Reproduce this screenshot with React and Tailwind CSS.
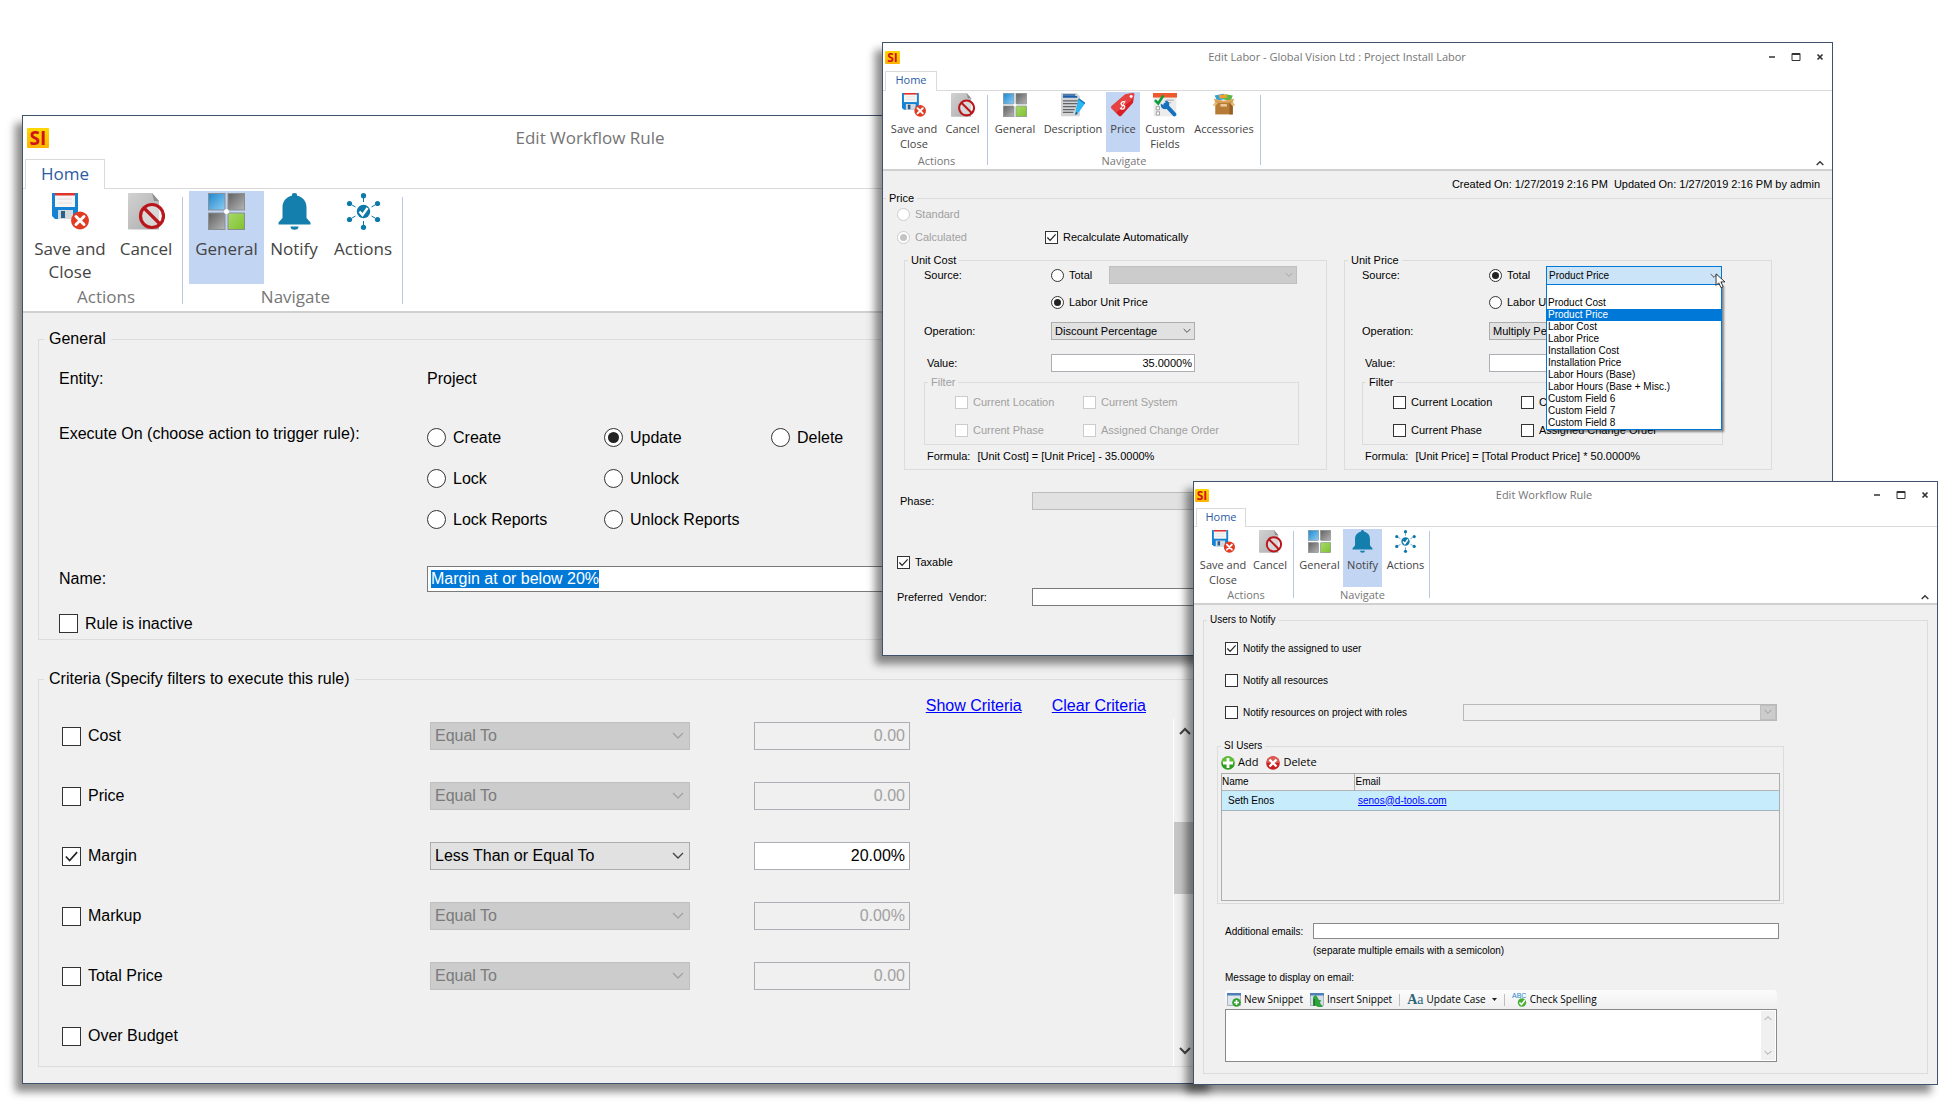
import React from 'react';
import clsx from 'clsx';

/* ---------- Ribbon icons ---------- */

const SaveIcon = ({ className }) => (
    <svg viewBox="0 0 37 37" className={className} aria-hidden="true">
        <path d="M0 0h26v26H3l-3-3z" fill="#1583d4" />
        <path d="M3 0h20v14H3z" fill="#f7f4f4" />
        <path d="M3 0h20v2.500H3z" fill="#e0342b" />
        <path d="M6 6h14M6 10h14" stroke="#dedede" strokeWidth="1" />
        <path d="M6 17h15v9H6z" fill="#d4d9dd" />
        <path d="M9 18h4v7H9z" fill="#2d5f8a" />
        <circle cx="28" cy="27.500" r="9" fill="#e33a22" />
        <path d="M24 23.500l8 8M32 23.500l-8 8" stroke="#fff" strokeWidth="3" strokeLinecap="round" />
    </svg>
);

const CancelIcon = ({ className }) => (
    <svg viewBox="0 0 37 37" className={className} aria-hidden="true">
        <defs>
            <linearGradient id="page-fill" x1="0" y1="0" x2="1" y2="1">
                <stop offset="0" stopColor="#d2d2d2" />
                <stop offset="1" stopColor="#acacac" />
            </linearGradient>
        </defs>
        <path d="M1 0h23l7 8v28.500H1a1 1 0 0 1-1-1V1a1 1 0 0 1 1-1z" fill="url(#page-fill)" />
        <path d="M24 0l7 8h-5z" fill="#8d8d8d" />
        <circle cx="24" cy="23" r="11.500" fill="#ececec" fillOpacity="0.6" stroke="#b9171c" strokeWidth="3.200" />
        <path d="M16 15l16 16" stroke="#b9171c" strokeWidth="3.200" />
    </svg>
);

const GeneralIcon = ({ className }) => (
    <svg viewBox="0 0 37 37" className={className} aria-hidden="true">
        <defs>
            <linearGradient id="tile-blue" x1="0" y1="0" x2="1" y2="1">
                <stop offset="0" stopColor="#1d87cf" />
                <stop offset="1" stopColor="#8fcdf2" />
            </linearGradient>
            <linearGradient id="tile-gray" x1="0" y1="0" x2="1" y2="1">
                <stop offset="0" stopColor="#606060" />
                <stop offset="1" stopColor="#b5b5b5" />
            </linearGradient>
            <linearGradient id="tile-green" x1="0" y1="0" x2="1" y2="1">
                <stop offset="0" stopColor="#a9d86c" />
                <stop offset="1" stopColor="#7fc22b" />
            </linearGradient>
        </defs>
        <rect x="0.500" y="0.500" width="16.500" height="16.500" fill="url(#tile-blue)" stroke="#8a8f94" />
        <rect x="20" y="0.500" width="16.500" height="16.500" fill="url(#tile-gray)" stroke="#8a8f94" />
        <rect x="0.500" y="20" width="16.500" height="16.500" fill="url(#tile-gray)" stroke="#8a8f94" />
        <rect x="20" y="20" width="16.500" height="16.500" fill="url(#tile-green)" stroke="#8a8f94" />
        <circle cx="18.500" cy="18.500" r="2.500" fill="#fff" />
    </svg>
);

const BellIcon = ({ className }) => (
    <svg viewBox="0 0 37 37" className={className} fill="#147eac" aria-hidden="true">
        <path d="M18.500 0a2.600 2.600 0 0 1 2.600 2.800C27 4 30.500 8.500 30.500 14.500V25l4 4.500V31.500H2.500V29.500l4-4.500V14.500C6.500 8.500 10 4 15.900 2.800A2.600 2.600 0 0 1 18.500 0z" />
        <path d="M14.500 33.500h8a4 3.200 0 0 1-8 0z" />
    </svg>
);

const ActionsIcon = ({ className }) => (
    <svg viewBox="0 0 37 37" className={className} fill="#0d79a8" aria-hidden="true">
        <circle cx="18.500" cy="18.500" r="6.700" />
        <circle cx="18.500" cy="2.700" r="2.600" />
        <circle cx="18.500" cy="34.300" r="2.600" />
        <circle cx="4.500" cy="10.500" r="2.600" />
        <circle cx="32.500" cy="10.500" r="2.600" />
        <circle cx="4.500" cy="26.500" r="2.600" />
        <circle cx="32.500" cy="26.500" r="2.600" />
        <path
            d="M18.500 5v4M18.500 28v4M7 12l3.500 2M30 12l-3.500 2M7 25l3.500-2M30 25l-3.500-2"
            stroke="#0d79a8"
            strokeWidth="1"
        />
        <path d="M14.500 18.500l3 3.500 5-7" fill="none" stroke="#fff" strokeWidth="2.400" />
    </svg>
);

const DescriptionIcon = ({ className }) => (
    <svg viewBox="0 0 37 37" className={className} aria-hidden="true">
        <path d="M0 0h24l5 5v31H0z" fill="#d3d3d3" />
        <path d="M3 3h19M3 6h22" stroke="#1b5fa8" strokeWidth="2.500" />
        <path d="M3 12h23M3 16.500h23M3 21h20M3 25.500h18M3 30h16" stroke="#5f6468" strokeWidth="2" />
        <path d="M27 9l10 7-9 13-6 5 1-9z" fill="#2cb6f2" />
        <path d="M27 9l10 7" stroke="#1579c4" strokeWidth="2.500" />
        <path d="M22 34l1-5 3 2.500z" fill="#134f86" />
    </svg>
);

const PriceIcon = ({ className }) => (
    <svg viewBox="0 0 37 37" className={className} aria-hidden="true">
        <path d="M22 2l12-2q2 0 2 2l-2 13-18 20q-2 2-4 0L1 24q-2-2 0-4z" fill="#d81f27" />
        <path d="M22 2l12-2q2 0 2 2l-1 6L8 30 1 24q-2-2 0-4z" fill="#f05a55" fillOpacity="0.600" />
        <circle cx="31" cy="5.500" r="2.300" fill="#fff" />
        <path d="M21 14c-3-2-7 1-5 4s6 0 5 4-5 3-7 1" fill="none" stroke="#fff" strokeWidth="2" />
        <path d="M15 25l7-13" fill="none" stroke="#fff" strokeWidth="1.500" />
    </svg>
);

const CustomFieldsIcon = ({ className }) => (
    <svg viewBox="0 0 37 37" className={className} aria-hidden="true">
        <path d="M1 0h35v36H1z" fill="#ececec" />
        <path d="M0 0h37v7H0z" fill="#ee5a2e" />
        <path d="M5 21h5v5H5zM5 29h5v5H5z" fill="#fff" stroke="#777" />
        <path d="M20 11h12M20 15h8" stroke="#a8a8a8" strokeWidth="1.500" />
        <path d="M3 11l5 5 8-12" fill="none" stroke="#119c3a" strokeWidth="4" />
        <path d="M19 18l14 15" stroke="#1770bd" strokeWidth="6" strokeLinecap="round" />
        <path d="M12 16q-1 9 8 9l5-5q1-9-7-8l3 5-3 3z" fill="#1770bd" />
    </svg>
);

const AccessoriesIcon = ({ className }) => (
    <svg viewBox="0 0 37 37" className={className} aria-hidden="true">
        <path d="M4 4l14-3 4 8-14 3z" fill="#27a3e0" />
        <path d="M20 2l12 2-3 8-11-2z" fill="#56b947" />
        <path d="M10 3l12-1 2 5-12 2z" fill="#f0a030" />
        <path d="M5 14h27v19H5z" fill="#b87b35" />
        <path d="M27 14h5v19h-5z" fill="#946026" />
        <path d="M5 14L1 19l3 1 5-4zM32 14l4 5-4 1-4-4z" fill="#e8bd7a" />
        <path d="M3 9l15 3 16-3-2 6H5z" fill="#d9a35a" />
        <path d="M13 17h10v4H13z" fill="#e8c89a" />
    </svg>
);

/* ---------- Small glyphs ---------- */

const Chevron = ({ up, className, width = 1.4 }) => (
    <svg viewBox="0 0 12 8" className={className} fill="none" stroke="currentColor" strokeWidth={width} aria-hidden="true">
        <path d={up ? 'M1 7l5-5 5 5' : 'M1 1l5 5 5-5'} />
    </svg>
);

const AddIcon = () => (
    <svg viewBox="0 0 14 14" className="size-3.5" aria-hidden="true">
        <circle cx="7" cy="7" r="6.800" fill="#2f9e1e" />
        <path d="M0.200 7a6.800 6.800 0 0 1 13.600 0z" fill="#63bd3c" />
        <path d="M7 2v10M2 7h10" stroke="#fff" strokeWidth="2.800" />
    </svg>
);

const DeleteIcon = () => (
    <svg viewBox="0 0 14 14" className="size-3.5" aria-hidden="true">
        <circle cx="7" cy="7" r="6.800" fill="#c81e1e" />
        <path d="M0.200 7a6.800 6.800 0 0 1 13.600 0z" fill="#dd5a52" />
        <path d="M3.500 3.500l7 7M10.500 3.500l-7 7" stroke="#fff" strokeWidth="2.400" />
    </svg>
);

const NewSnippetIcon = () => (
    <svg viewBox="0 0 14 14" className="size-3.5" aria-hidden="true">
        <path d="M0.500 0.500h13v12H0.500z" fill="#dfe6ee" stroke="#a9b4c0" />
        <path d="M0 0h14v2.500H0z" fill="#4f7fb8" />
        <circle cx="9.500" cy="9.500" r="4.300" fill="#33a02c" />
        <path d="M9.500 7v5M7 9.500h5" stroke="#fff" strokeWidth="1.600" />
    </svg>
);

const InsertSnippetIcon = () => (
    <svg viewBox="0 0 14 14" className="size-3.5" aria-hidden="true">
        <path d="M0.500 0.500h13v12H0.500z" fill="#d5dde6" stroke="#a9b4c0" />
        <path d="M0 0h14v2.500H0z" fill="#4f7fb8" />
        <path d="M3 4l3-2 3 5h2l-1 3 3 4H8L4 12z" fill="#2ea33a" />
        <path d="M4 6v7" stroke="#176d22" strokeWidth="1.500" />
    </svg>
);

const SpellingIcon = () => (
    <svg viewBox="0 0 15 15" className="size-[15px]" aria-hidden="true">
        <text x="0" y="6" fontSize="7" fontFamily="Liberation Sans, sans-serif" fill="#1f86c8">ABC</text>
        <circle cx="10" cy="10.500" r="4.200" fill="#46ad35" />
        <path d="M7.500 10.500l2 2 3.500-4.500" fill="none" stroke="#fff" strokeWidth="1.500" />
    </svg>
);

/* ---------- Window chrome ---------- */

const SIZES = {
    lg: {
        bar: 'h-[43px] pl-1',
        logo: 'w-[22px] h-5 text-[19px] leading-5',
        title: 'text-[17px] pr-[84px]',
        tabs: 'h-[30px]',
        tab: 'w-20 text-[17px]',
        ribbon: 'h-[124px]',
        firstGroup: 'pl-[7px]',
        group: 'pl-[6px] pt-[2px]',
        buttons: 'h-[93px]',
        button: 'pt-[2px] text-[17px] leading-[23px]',
        icon: 'size-[37px] mb-[7px]',
        caption: 'text-[17px] leading-[26px]',
        rule: 'mt-[8px] h-[107px]',
    },
    md: {
        bar: 'h-7 pl-[2px]',
        logo: 'w-[15px] h-[13px] text-[12px] leading-[13px]',
        title: 'text-[11px] pr-[41px]',
        tabs: 'h-5',
        tab: 'w-[52px] text-[11px]',
        ribbon: 'h-20',
        firstGroup: 'pl-[5px]',
        group: 'px-[2px] pt-[1px]',
        buttons: 'h-[61px]',
        button: 'pt-[1px] text-[11px] leading-[15px]',
        icon: 'size-6 mb-[4px]',
        caption: 'text-[11px] leading-[17px]',
        rule: 'mt-[4px] h-[70px]',
    },
    sm: {
        bar: 'h-[26px] pl-[1px]',
        logo: 'w-[14px] h-[13px] text-[12px] leading-[13px]',
        title: 'text-[11px] pr-[41px]',
        tabs: 'h-[19px]',
        tab: 'w-[50px] text-[11px]',
        ribbon: 'h-[78px]',
        firstGroup: 'pl-[5px]',
        group: 'pl-[2px] pt-[2px]',
        buttons: 'h-[58px]',
        button: 'pt-[1px] text-[11px] leading-[15px]',
        icon: 'size-[23px] mb-[4px]',
        caption: 'text-[11px] leading-[15px]',
        rule: 'mt-[4px] h-[67px]',
    },
};

const RibbonGroup = ({ size, group, first }) => {
    const s = SIZES[size];
    return (
        <>
            <div className={clsx('flex flex-col', s.group, first && s.firstGroup)}>
                <div className={clsx('flex', s.buttons)}>
                    {group.items.map(({ label, Icon, width, active }) => (
                        <button
                            key={label}
                            type="button"
                            className={clsx(
                                'flex flex-col items-center text-center whitespace-pre-line text-[#444]',
                                s.button,
                                width,
                                active && 'bg-[#c2d5f2]'
                            )}
                        >
                            <Icon className={s.icon} />
                            {label}
                        </button>
                    ))}
                </div>
                <div className={clsx('text-center text-[#777]', s.caption)}>{group.caption}</div>
            </div>
            <div className={clsx('w-px bg-[#b9c8e0]', s.rule)} />
        </>
    );
};

const AppWindow = ({ size, title, groups, controls, className, children }) => {
    const s = SIZES[size];
    return (
        <section
            className={clsx(
                'absolute border border-[#41536c] bg-[#f0f0f0] shadow-[-7px_8px_8px_rgba(0,0,0,0.45)]',
                className
            )}
        >
            <header className="bg-white font-['Open_Sans',sans-serif]">
                <div className={clsx('flex items-center', s.bar)}>
                    <span
                        className={clsx(
                            'rounded-[1px] bg-gradient-to-b from-[#ffd800] to-[#ffb300] text-center font-bold text-[#d0121b]',
                            s.logo
                        )}
                    >
                        SI
                    </span>
                    <h1 className={clsx('flex-1 text-center text-[#757575]', s.title, controls && 'pl-[52px]')}>{title}</h1>
                    {controls && (
                        <div className="flex items-center gap-[6px] pr-[3px] text-[#333]">
                            <button type="button" aria-label="Minimize" className="grid size-[18px] place-items-center">
                                <svg viewBox="0 0 10 10" className="size-[10px]" stroke="currentColor" strokeWidth="1.500">
                                    <path d="M2 5h6" />
                                </svg>
                            </button>
                            <button type="button" aria-label="Maximize" className="grid size-[18px] place-items-center">
                                <svg viewBox="0 0 10 10" className="size-[10px]" fill="none" stroke="currentColor">
                                    <path d="M1 1.500h8v7H1z" />
                                    <path d="M1 2h8" strokeWidth="2" />
                                </svg>
                            </button>
                            <button type="button" aria-label="Close" className="grid size-[18px] place-items-center">
                                <svg viewBox="0 0 10 10" className="size-[10px]" stroke="currentColor" strokeWidth="1.700">
                                    <path d="M2.500 2.500l5 5M7.500 2.500l-5 5" />
                                </svg>
                            </button>
                        </div>
                    )}
                </div>
                <div className={clsx('flex', s.tabs)}>
                    <div className="w-[2px] border-b border-[#dadada]" />
                    <button
                        type="button"
                        className={clsx('border-x border-t border-[#dadada] pb-[2px] text-center text-[#2b5aa5]', s.tab)}
                    >
                        Home
                    </button>
                    <div className="flex-1 border-b border-[#dadada]" />
                </div>
                <div className={clsx('flex border-b-2 border-[#d0d0d0]', s.ribbon)}>
                    {groups.map((group, i) => (
                        <RibbonGroup key={group.caption} size={size} group={group} first={i === 0} />
                    ))}
                    {controls && (
                        <button
                            type="button"
                            aria-label="Collapse ribbon"
                            className="mr-[8px] mb-[3px] ml-auto self-end text-[#333]"
                        >
                            <Chevron up width={2} className="h-[6px] w-[8px]" />
                        </button>
                    )}
                </div>
            </header>
            {children}
        </section>
    );
};

/* ---------- Form controls ---------- */

const Tick = ({ type = 'checkbox', big, label, className, ...props }) => (
    <label className={clsx('flex items-center whitespace-nowrap', big ? 'gap-[7px]' : 'gap-[5px]', props.disabled && 'text-[#a0a0a0]', className)}>
        <span className="grid place-items-center">
            <input
                type={type}
                className={clsx(
                    'peer col-start-1 row-start-1 appearance-none border border-[#333] bg-white disabled:border-[#cccccc]',
                    big ? 'size-[19px]' : 'size-[13px]',
                    type === 'radio' && 'rounded-full'
                )}
                {...props}
            />
            {type === 'radio' ? (
                <span
                    className={clsx(
                        'pointer-events-none invisible col-start-1 row-start-1 rounded-full bg-[#222] peer-checked:visible peer-disabled:bg-[#c4c4c4]',
                        big ? 'size-[11px]' : 'size-[7px]'
                    )}
                />
            ) : (
                <svg
                    viewBox="0 0 12 12"
                    className={clsx(
                        'pointer-events-none invisible col-start-1 row-start-1 peer-checked:visible',
                        big ? 'size-[15px]' : 'size-[11px]'
                    )}
                    fill="none"
                    stroke="#222"
                    strokeWidth="1.300"
                    aria-hidden="true"
                >
                    <path d="M1.500 6l3 3.200L10.500 2.500" />
                </svg>
            )}
        </span>
        {label}
    </label>
);

const Select = ({ label, value, big, className, ...props }) => (
    <span className={clsx('grid items-center', className)}>
        <select
            aria-label={label}
            className={clsx(
                'col-start-1 row-start-1 w-full appearance-none border border-[#adadad] bg-[#e1e1e1] disabled:border-[#bfbfbf] disabled:bg-[#cccccc] disabled:text-[#7b7b7b] disabled:opacity-100',
                big ? 'h-7 pl-1' : 'h-[18px] pl-[3px]'
            )}
            {...props}
        >
            <option>{value}</option>
        </select>
        <Chevron
            className={clsx(
                'pointer-events-none col-start-1 row-start-1 justify-self-end',
                big ? 'mr-[6px] h-2 w-3' : 'mr-[4px] h-[6px] w-[8px]',
                props.disabled ? 'text-[#a3a3a3]' : 'text-[#444]'
            )}
        />
    </span>
);

const Group = ({ legend, big, className, legendClassName, children }) => (
    <fieldset className={clsx('border-[#dcdcdc]', className)}>
        <legend className={clsx(big ? 'ml-[5px] h-5 px-[5px] leading-5' : 'ml-[3px] h-3 px-[3px] leading-3', legendClassName)}>
            {legend}
        </legend>
        {children}
    </fieldset>
);

/* ---------- Edit Workflow Rule : General ---------- */

const EVENTS = ['Create', 'Update', 'Delete', 'Lock', 'Unlock', null, 'Lock Reports', 'Unlock Reports'];

const CRITERIA = [
    { name: 'Cost', op: 'Equal To', value: '0.00' },
    { name: 'Price', op: 'Equal To', value: '0.00' },
    { name: 'Margin', op: 'Less Than or Equal To', value: '20.00%', on: true },
    { name: 'Markup', op: 'Equal To', value: '0.00%' },
    { name: 'Total Price', op: 'Equal To', value: '0.00' },
    { name: 'Over Budget' },
];

const RuleGeneralWindow = () => {
    const nameRef = React.useRef(null);

    React.useEffect(() => {
        nameRef.current.focus({ preventScroll: true });
        nameRef.current.select();
    }, []);

    return (
        <AppWindow
            size="lg"
            title="Edit Workflow Rule"
            className="top-[115px] left-[22px] w-[1194px] pb-4 text-[16px] text-black"
            groups={[
                {
                    caption: 'Actions',
                    items: [
                        { label: 'Save and\nClose', Icon: SaveIcon, width: 'w-20' },
                        { label: 'Cancel', Icon: CancelIcon, width: 'w-[72px]' },
                    ],
                },
                {
                    caption: 'Navigate',
                    items: [
                        { label: 'General', Icon: GeneralIcon, width: 'w-[75px]', active: true },
                        { label: 'Notify', Icon: BellIcon, width: 'w-[60px]' },
                        { label: 'Actions', Icon: ActionsIcon, width: 'w-[78px]' },
                    ],
                },
            ]}
        >
            <Group big legend="General" className="mx-[15px] mt-4 border">
                <div className="grid grid-cols-[368px_1fr] pr-6 pl-5">
                    <div className="flex h-[60px] items-center">Entity:</div>
                    <div className="flex items-center">Project</div>
                    <div className="flex h-[50px] items-center">Execute On (choose action to trigger rule):</div>
                    <div className="grid w-fit grid-cols-[177px_167px_120px] pt-2">
                        {EVENTS.map((event, i) =>
                            event ? (
                                <Tick
                                    key={event}
                                    big
                                    type="radio"
                                    name="rule-event"
                                    label={event}
                                    defaultChecked={event === 'Update'}
                                    className="h-[41px]"
                                />
                            ) : (
                                <span key={i} />
                            )
                        )}
                    </div>
                    <label htmlFor="rule-name" className="mt-[26px] flex h-[26px] items-center">Name:</label>
                    <input
                        id="rule-name"
                        ref={nameRef}
                        defaultValue="Margin at or below 20%"
                        className="mt-[26px] h-[26px] border border-[#7a7a7a] bg-white px-[3px] outline-none selection:bg-[#0078d7] selection:text-white"
                    />
                    <Tick big label="Rule is inactive" className="h-[47px] pt-4" />
                </div>
            </Group>

            <Group big legend="Criteria (Specify filters to execute this rule)" className="mx-[15px] mt-[29px] border">
                <div className="flex h-[30px] items-center justify-end gap-[30px] pt-1 pr-[53px] text-[#0000ff]">
                    <a href="#show" className="underline">Show Criteria</a>
                    <a href="#clear" className="underline">Clear Criteria</a>
                </div>
                <div className="flex justify-between">
                    <div className="flex flex-col gap-8 pt-[3px] pb-4 pl-[23px]">
                        {CRITERIA.map(({ name, op, value, on = false }) => (
                            <div key={name} className="grid h-7 grid-cols-[368px_260px_156px] items-center">
                                <Tick big label={name} defaultChecked={on} />
                                {op && (
                                    <>
                                        <Select big label={`${name} operator`} value={op} disabled={!on} />
                                        <input
                                            aria-label={`${name} value`}
                                            defaultValue={value}
                                            disabled={!on}
                                            className="ml-16 h-7 w-[156px] border border-[#adadb3] bg-white px-1 text-right disabled:bg-[#f0f0f0] disabled:text-[#a0a0a0]"
                                        />
                                    </>
                                )}
                            </div>
                        ))}
                    </div>
                    <div className="mr-[3px] flex w-[23px] flex-col items-center border-l border-white pt-2 pb-[11px] text-[#444]">
                        <Chevron up width={2} className="h-2 w-3" />
                        <div className="mt-[87px] mb-auto h-[72px] w-full bg-[#c6c6c6]" />
                        <Chevron width={2} className="h-2 w-3" />
                    </div>
                </div>
            </Group>
        </AppWindow>
    );
};

/* ---------- Edit Labor : Price ---------- */

const FILTERS = ['Current Location', 'Current System', 'Current Phase', 'Assigned Change Order'];

const SOURCES = [
    'Product Cost',
    'Product Price',
    'Labor Cost',
    'Labor Price',
    'Installation Cost',
    'Installation Price',
    'Labor Hours (Base)',
    'Labor Hours (Base + Misc.)',
    'Custom Field 6',
    'Custom Field 7',
    'Custom Field 8',
];

const SourceDropdown = () => (
    <div className="relative ml-[3px] w-44 text-[10px]">
        <select
            aria-label="Total source"
            className="block h-[19px] w-full appearance-none border border-[#0078d7] bg-[#cce4f7] pl-[2px]"
        >
            <option>Product Price</option>
        </select>
        <Chevron className="pointer-events-none absolute top-[7px] right-[4px] h-[6px] w-[8px] text-[#444]" />
        <ul
            role="listbox"
            aria-label="Sources"
            className="absolute top-[18px] left-0 z-10 w-full border border-[#0078d7] bg-white pt-3 leading-3 shadow-[2px_2px_2px_rgba(0,0,0,0.45)]"
        >
            {SOURCES.map(source => (
                <li
                    key={source}
                    role="option"
                    aria-selected={source === 'Product Price'}
                    className="pl-[1px] aria-selected:bg-[#0078d7] aria-selected:text-white"
                >
                    {source}
                </li>
            ))}
        </ul>
        <svg viewBox="0 0 12 18" className="absolute top-[7px] left-[169px] z-20 h-[16px] w-[11px]" aria-hidden="true">
            <path d="M1 1v13l3-3 2.500 5.500 2.500-1L6.500 10H11z" fill="#fff" stroke="#222" strokeWidth="1" />
        </svg>
    </div>
);

const UnitGroup = ({ legend, id, operation, value, source, filtersDisabled, formula, total, bodyClassName, filterClassName }) => (
    <Group legend={legend} className="border">
        <div className={bodyClassName}>
            <div className="grid grid-cols-[127px_1fr] items-center">
                <span>Source:</span>
                <div className="flex h-[18px] items-center">
                    <Tick type="radio" name={`${id}-source`} label="Total" defaultChecked={total} className="w-[54px]" />
                    {source}
                </div>
                <Tick
                    type="radio"
                    name={`${id}-source`}
                    label="Labor Unit Price"
                    defaultChecked={!total}
                    className="col-start-2 h-9"
                />
                <span>Operation:</span>
                <div className="flex h-[22px] items-center">
                    <Select label={`${legend} operation`} value={operation} className="w-36" />
                </div>
                <label htmlFor={`${id}-value`} className="pt-2 pl-[3px]">Value:</label>
                <div className="flex h-[34px] items-center pt-2">
                    <input
                        id={`${id}-value`}
                        defaultValue={value}
                        className="h-[18px] w-36 border border-[#adadb3] bg-white px-[2px] text-right"
                    />
                </div>
            </div>
            <Group
                legend="Filter"
                className={clsx('border', filterClassName)}
                legendClassName={filtersDisabled && 'text-[#a0a0a0]'}
            >
                <div className="grid grid-cols-[128px_1fr] pl-[30px]">
                    {FILTERS.map(name => (
                        <Tick key={name} label={name} disabled={filtersDisabled} className="h-7" />
                    ))}
                </div>
            </Group>
            <div className="flex h-6 items-center gap-[7px] pb-[2px] pl-[3px]">
                <span>Formula:</span>
                <output>{formula}</output>
            </div>
        </div>
    </Group>
);

const LaborPriceWindow = () => (
    <AppWindow
        size="md"
        controls
        title="Edit Labor - Global Vision Ltd : Project Install Labor"
        className="top-[42px] left-[882px] w-[951px] pb-[45px] text-[11px] text-black"
        groups={[
            {
                caption: 'Actions',
                items: [
                    { label: 'Save and\nClose', Icon: SaveIcon, width: 'w-[52px]' },
                    { label: 'Cancel', Icon: CancelIcon, width: 'w-[45px]' },
                ],
            },
            {
                caption: 'Navigate',
                items: [
                    { label: 'General', Icon: GeneralIcon, width: 'w-[50px]' },
                    { label: 'Description', Icon: DescriptionIcon, width: 'w-[66px]' },
                    { label: 'Price', Icon: PriceIcon, width: 'w-[34px]', active: true },
                    { label: 'Custom\nFields', Icon: CustomFieldsIcon, width: 'w-[50px]' },
                    { label: 'Accessories', Icon: AccessoriesIcon, width: 'w-[68px]' },
                ],
            },
        ]}
    >
        <p className="flex h-[21px] items-end justify-end pr-3 leading-4 whitespace-pre">
            {'Created On: 1/27/2019 2:16 PM  Updated On: 1/27/2019 2:16 PM by admin'}
        </p>
        <Group legend="Price" className="border-t">
            <div className="grid grid-cols-[148px_1fr] pl-[14px]">
                <Tick type="radio" name="price-mode" label="Standard" disabled className="h-[21px]" />
                <span />
                <Tick type="radio" name="price-mode" label="Calculated" disabled defaultChecked className="h-6" />
                <Tick label="Recalculate Automatically" defaultChecked />
            </div>
            <div className="mt-[5px] grid grid-cols-[423px_428px] gap-[17px] pl-[21px]">
                <UnitGroup
                    id="cost"
                    legend="Unit Cost"
                    operation="Discount Percentage"
                    value="35.0000%"
                    filtersDisabled
                    formula="[Unit Cost] = [Unit Price] - 35.0000%"
                    source={<Select label="Total source" value="" disabled className="ml-[4px] w-[188px]" />}
                    bodyClassName="pl-[19px]"
                    filterClassName="mr-[27px]"
                />
                <UnitGroup
                    id="price"
                    legend="Unit Price"
                    operation="Multiply Percentage"
                    value="50.0000%"
                    total
                    formula="[Unit Price] = [Total Product Price] * 50.0000%"
                    source={<SourceDropdown />}
                    bodyClassName="pl-[17px]"
                    filterClassName="mr-12"
                />
            </div>
        </Group>
        <div className="grid grid-cols-[135px_1fr] items-center pr-[60px] pl-[14px]">
            <label htmlFor="phase" className="flex h-[62px] items-center pl-[3px]">Phase:</label>
            <input id="phase" disabled className="h-[18px] border border-[#bcbcbc] bg-[#e1e1e1]" />
            <Tick label="Taxable" defaultChecked className="col-span-2 mt-2 h-11" />
            <label htmlFor="vendor" className="flex h-[26px] items-center whitespace-pre">{'Preferred  Vendor:'}</label>
            <input id="vendor" className="h-[18px] border border-[#7a7a7a] bg-white" />
        </div>
    </AppWindow>
);

/* ---------- Edit Workflow Rule : Notify ---------- */

const ToolButton = ({ icon, children }) => (
    <button type="button" className="flex items-center gap-[3px] whitespace-nowrap">
        {icon}
        {children}
    </button>
);

const RuleNotifyWindow = () => (
    <AppWindow
        size="sm"
        controls
        title="Edit Workflow Rule"
        className="top-[481px] left-[1193px] w-[745px] pb-[10px] text-[10px] text-black"
        groups={[
            {
                caption: 'Actions',
                items: [
                    { label: 'Save and\nClose', Icon: SaveIcon, width: 'w-[48px]' },
                    { label: 'Cancel', Icon: CancelIcon, width: 'w-[46px]' },
                ],
            },
            {
                caption: 'Navigate',
                items: [
                    { label: 'General', Icon: GeneralIcon, width: 'w-[47px]' },
                    { label: 'Notify', Icon: BellIcon, width: 'w-[39px]', active: true },
                    { label: 'Actions', Icon: ActionsIcon, width: 'w-[47px]' },
                ],
            },
        ]}
    >
        <Group legend="Users to Notify" className="mx-[9px] mt-[9px] border pb-[11px]">
            <div className="flex flex-col pt-[6px] pl-[21px]">
                <Tick label="Notify the assigned to user" defaultChecked className="h-8" />
                <Tick label="Notify all resources" className="h-8" />
                <div className="flex h-8 items-center">
                    <Tick label="Notify resources on project with roles" className="w-[238px]" />
                    <span className="grid w-[314px] items-center">
                        <select
                            aria-label="Roles"
                            disabled
                            className="col-start-1 row-start-1 h-[17px] appearance-none border border-[#b8b8bc] bg-[#f0f0f0] opacity-100"
                        />
                        <span className="pointer-events-none col-start-1 row-start-1 mr-px grid h-[15px] w-4 place-items-center justify-self-end border border-[#bfbfbf] bg-[#cccccc] text-[#9a9a9a]">
                            <Chevron className="h-[6px] w-[8px]" />
                        </span>
                    </span>
                </div>
            </div>

            <Group legend="SI Users" className="mt-3 ml-[13px] w-[567px] border">
                <div className="px-[3px] pb-[2px]">
                    <div className="flex h-[21px] items-center gap-2 font-['Open_Sans',sans-serif] text-[11px]">
                        <ToolButton icon={<AddIcon />}>Add</ToolButton>
                        <ToolButton icon={<DeleteIcon />}>Delete</ToolButton>
                    </div>
                    <div className="h-32 border border-[#adadad]">
                        <table className="w-full table-fixed border-collapse text-left">
                            <thead>
                                <tr className="h-4 border-b border-[#b4b4b4]">
                                    <th className="w-[132px] border-r border-[#adadad] leading-3 font-normal">Name</th>
                                    <th className="pl-[1px] leading-3 font-normal">Email</th>
                                </tr>
                            </thead>
                            <tbody>
                                <tr className="h-5 border-b border-[#a5b4bb] bg-[#c7ecfc]">
                                    <td className="pl-[6px]">Seth Enos</td>
                                    <td className="pl-[4px]">
                                        <a href="mailto:senos@d-tools.com" className="text-[#0000ff] underline">senos@d-tools.com</a>
                                    </td>
                                </tr>
                            </tbody>
                        </table>
                    </div>
                </div>
            </Group>

            <div className="mt-[19px] ml-[21px] grid w-[554px] grid-cols-[88px_1fr] items-center">
                <label htmlFor="extra-emails">Additional emails:</label>
                <input id="extra-emails" className="h-4 border border-[#8a8a8a] bg-white" />
                <span className="col-start-2 flex h-[22px] items-center">(separate multiple emails with a semicolon)</span>
            </div>
            <div className="ml-[21px] w-[552px]">
                <label htmlFor="message" className="flex h-[29px] items-center pt-1">Message to display on email:</label>
                <div className="flex h-[19px] items-center gap-[7px] rounded-t-sm bg-gradient-to-b from-[#fcfcfc] to-[#efefef] pl-[2px] font-['Open_Sans',sans-serif] text-[10px]">
                    <ToolButton icon={<NewSnippetIcon />}>New Snippet</ToolButton>
                    <ToolButton icon={<InsertSnippetIcon />}>Insert Snippet</ToolButton>
                    <span className="h-3 w-px bg-[#bdbdbd]" />
                    <ToolButton
                        icon={
                            <span className="font-['Liberation_Serif',serif] text-[14px] leading-4 text-[#2c6478]">
                                <b>A</b>a
                            </span>
                        }
                    >
                        Update Case
                        <svg viewBox="0 0 5 3" className="ml-[3px] h-[3px] w-[5px]" aria-hidden="true">
                            <path d="M0 0h5L2.500 3z" fill="#222" />
                        </svg>
                    </ToolButton>
                    <span className="h-3 w-px bg-[#bdbdbd]" />
                    <ToolButton icon={<SpellingIcon />}>Check Spelling</ToolButton>
                </div>
                <div className="flex h-[53px] border border-[#8a8a8a] bg-white">
                    <textarea id="message" className="flex-1 resize-none bg-white" />
                    <div className="m-[1px] flex w-[14px] flex-col items-center justify-between bg-[#f0f0f0] py-1 text-[#9a9a9a]">
                        <Chevron up className="h-[6px] w-[8px]" />
                        <Chevron className="h-[6px] w-[8px]" />
                    </div>
                </div>
            </div>
        </Group>
    </AppWindow>
);

const App = () => (
    <main className="relative min-h-screen overflow-hidden bg-white font-['Liberation_Sans',Arial,sans-serif]">
        <RuleGeneralWindow />
        <LaborPriceWindow />
        <RuleNotifyWindow />
    </main>
);

export default App;
